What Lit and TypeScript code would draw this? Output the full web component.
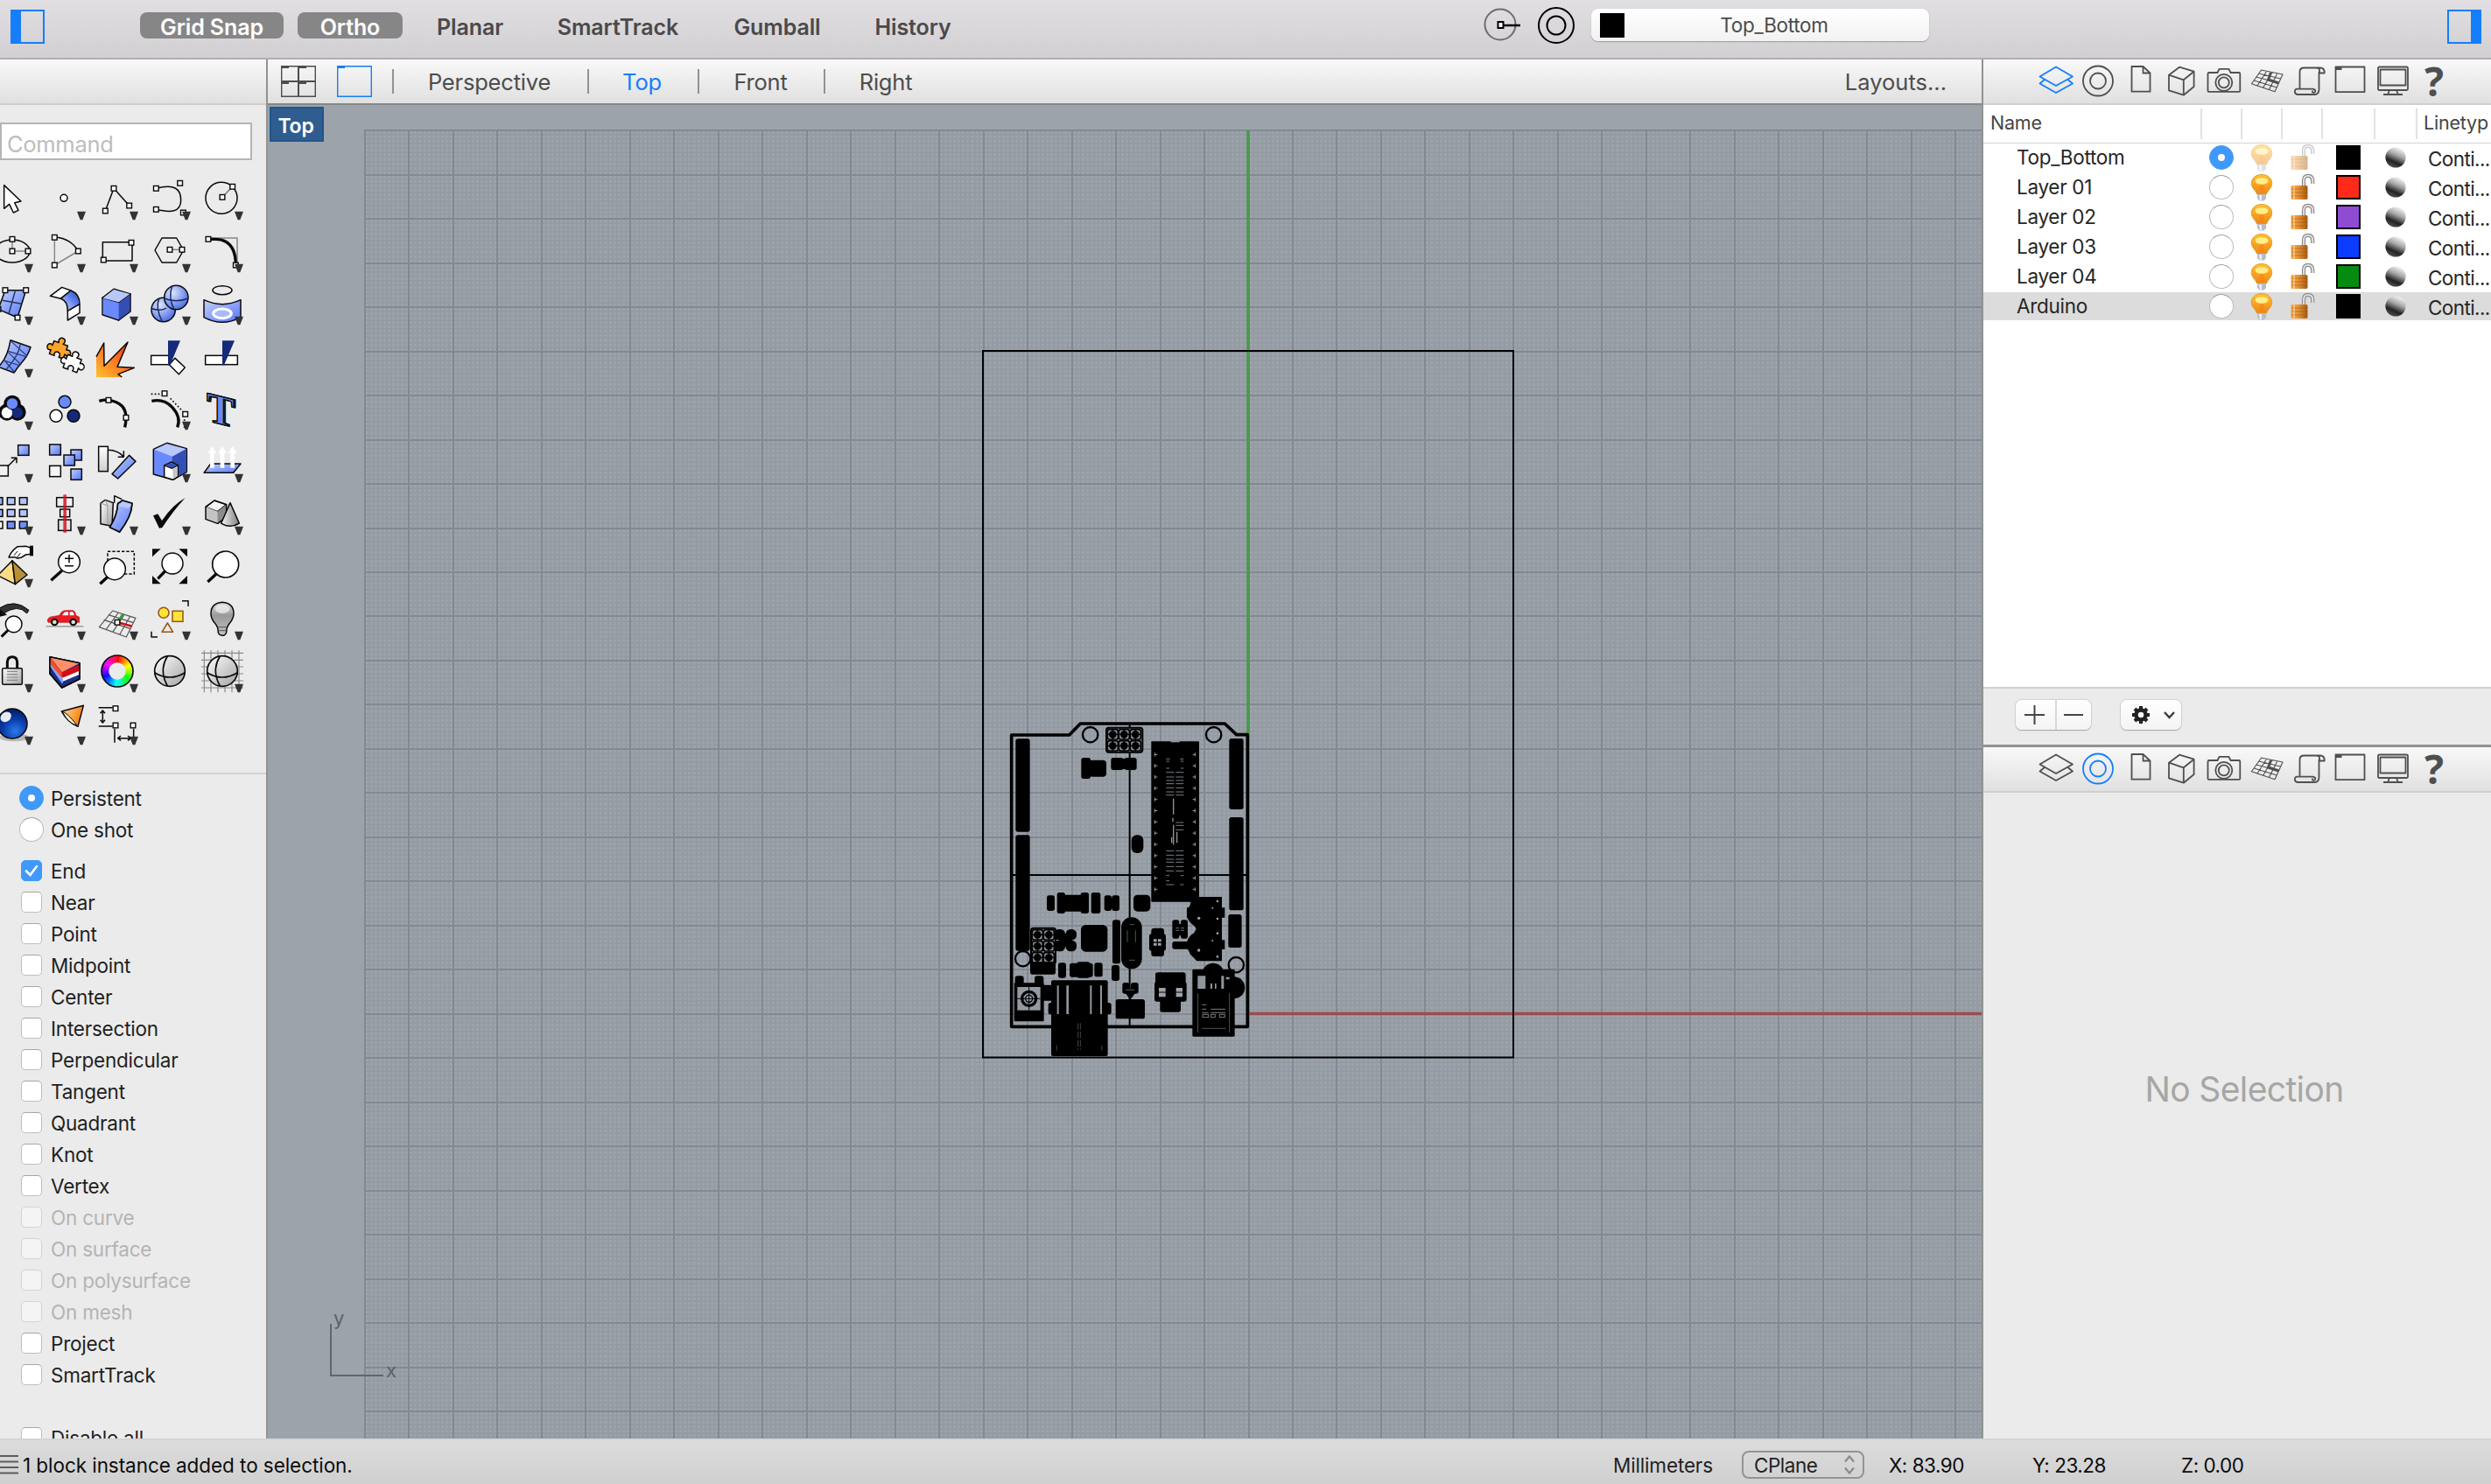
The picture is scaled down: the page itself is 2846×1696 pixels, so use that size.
import { LitElement, html, css, svg, nothing } from "lit";
import { customElement, state } from "lit/decorators.js";
import { classMap } from "lit/directives/class-map.js";
import { styleMap } from "lit/directives/style-map.js";

/* ---------- drawing helpers ---------- */
const INK = "#0a0a0a";
const node = (x: number, y: number) =>
  svg`<rect x=${x - 8.5} y=${y - 8.5} width="17" height="17" fill="#fff" stroke=${INK} stroke-width="4.2"/>`;
const box = (x: number, y: number, w: number, h: number, fill: string) =>
  svg`<rect x=${x} y=${y} width=${w} height=${h} fill=${fill} stroke=${INK} stroke-width="4.5"/>`;
const p = (d: string, fill = "none", stroke = INK, w = 4.5) =>
  svg`<path d=${d} fill=${fill} stroke=${stroke} stroke-width=${w} stroke-linejoin="round"/>`;
const c = (x: number, y: number, r: number, fill: string, w = 4.5, stroke = INK) =>
  svg`<circle cx=${x} cy=${y} r=${r} fill=${fill} stroke=${stroke} stroke-width=${w}/>`;

const wheel = () => {
  const out = [];
  const n = 36;
  for (let i = 0; i < n; i++) {
    const a = ((i * 360) / n - 90) * (Math.PI / 180);
    const b = (((i + 1.15) * 360) / n - 90) * (Math.PI / 180);
    out.push(svg`<path d=${`M${402 + 41 * Math.cos(a)} ${773 + 41 * Math.sin(a)} A41 41 0 0 1 ${402 + 41 * Math.cos(b)} ${773 + 41 * Math.sin(b)}`}
      fill="none" stroke=${`hsl(${(i * 360) / n},100%,52%)`} stroke-width="24"/>`);
  }
  return out;
};
const globe = (x: number) => svg`${c(x, 773, 52, "url(#grey)", 5)}
  ${p(`M${x - 52} 778 Q${x} 810 ${x + 52} 778 M${x - 8} 722 Q${x - 38} 770 ${x - 8} 824`, "none", INK, 5)}`;
/* Jigsaw piece: knobs above and below, sockets at the sides. */
const puzzle = (x: number, y: number, fill: string) => svg`<g transform=${`translate(${x} ${y}) rotate(20)`}>
  ${p("M-25 -23H-8Q-12 -30 -10 -35Q-6 -42 0 -42Q8 -42 11 -35Q12 -30 8 -23H25V-8Q32 -12 37 -9Q43 -5 43 0Q42 9 36 11Q31 12 25 8V24H9Q12 17 9 13Q5 8 0 8Q-7 9 -9 14Q-11 19 -7 24H-25V9Q-32 13 -37 9Q-42 5 -41 -1Q-40 -9 -33 -10Q-29 -10 -25 -7Z", fill)}</g>`;

/* Tools are listed row by row; art uses sheet units of 180 per cell. */
type Tool = { art: unknown; menu?: boolean };
const t = (art: unknown, menu = true): Tool => ({ art, menu });

const SHEET_A: Tool[][] = [
  [
    t(p("M14 67V147L32 132L46 161L63 153L50 127L72 122Z", "#fff"), false),
    t(c(219, 111, 12, "#fff")),
    t(svg`${p("M361 155L390 78L443 137")}${node(361, 155)}${node(390, 78)}${node(443, 137)}`),
    t(svg`${p("M535 78C600 60 620 82 620 118C620 160 585 162 535 150")}${node(535, 78)}${node(535, 150)}${node(617, 60)}${node(628, 161)}`),
    t(svg`${c(759, 111, 54, "none")}${p("M762 108L797 72", "none", "#777")}${node(762, 108)}${node(797, 72)}`),
  ],
  [
    t(svg`<ellipse cx="42" cy="293" rx="60" ry="39" fill="none" stroke=${INK} stroke-width="4.5"/>${p("M42 252V293H96", "none", "#888")}${node(42, 252)}${node(42, 293)}${node(96, 293)}`),
    t(svg`${p("M187 246V341L268 293", "none", "#888")}${p("M187 244Q245 250 268 293")}${node(187, 246)}${node(187, 341)}${node(268, 293)}`),
    t(svg`${p("M352 262H453V326H352Z")}${node(450, 264)}${node(355, 323)}`),
    t(svg`${p("M531 290L555 248H605L629 290L605 332H555Z")}${p("M582 288H622", "none", "#888")}${node(582, 288)}${node(624, 288)}`),
    t(svg`${p("M714 248H813V341", "none", "#888")}${p("M714 252H740Q808 254 808 341", "none", INK, 10)}${node(714, 252)}${node(808, 341)}`),
  ],
  [
    t(svg`${p("M18 427H89L60 521L-6 492Z", "url(#blue)")}${p("M8 462L74 474M52 430L30 508", "none", "#26335f")}${node(18, 427)}${node(89, 427)}${node(60, 521)}${node(-6, 492)}`),
    t(svg`${p("M172 447L212 417L243 428L208 456Z", "#fff")}${p("M208 456L243 428Q274 440 273 475L232 498Q232 464 208 456Z", "url(#blueDown)")}${p("M232 498L273 475V505L232 530Z", "#fff")}`),
    t(svg`${p("M351 453L390 423L447 440L407 470Z", "#b9c8fb")}${p("M351 453L407 470V530L351 511Z", "#6a8afb")}${p("M407 470L447 440V500L407 530Z", "#334fb3")}<path d="M353 454L390 425L445 440L407 468Z" fill="#b9c8fb"/><path d="M353 456L408 471V528L353 509Z" fill="#6a8afb"/><path d="M407 471L445 442V499L407 528Z" fill="#334fb3"/>`),
    t(svg`${c(560, 494, 41, "url(#blueBall)")}${p("M545 456Q532 490 556 534M520 490Q555 500 570 488", "none", "#1c2c63")}${c(604, 452, 41, "url(#blueBall)")}${p("M590 413Q576 450 596 492M563 455Q604 472 644 455", "none", "#1c2c63")}`),
    t(svg`<ellipse cx="762" cy="427" rx="33" ry="15" fill="none" stroke=${INK} stroke-width="4.5"/>${p("M699 460Q762 490 825 460V520Q762 554 699 520Z", "url(#blue)")}<ellipse cx="762" cy="507" rx="31" ry="16" fill="#a9bafa" stroke="#fff" stroke-width="9"/>`),
  ],
  [
    t(svg`${p("M36 598L105 622Q96 650 77 672Q60 692 48 710L-6 690Q26 660 36 598Z", "url(#blue)")}${p("M28 636L92 656M14 668L70 686M70 610Q66 650 20 700M36 600L92 652M28 640L72 682M16 668L48 706", "none", "#22356f", 3.5)}`),
    t(svg`${puzzle(201, 631, "#fba32a")}${puzzle(248, 678, "#fff")}`, false),
    t(svg`<path d="M330 725V655L356 608L357 687L438 605L402 690L460 693L405 715L418 725Z" fill="url(#fire)"/>${p("M330 655L356 608L357 687L438 605L402 690L460 693L405 715L418 725")}`, false),
    t(svg`${box(518, 651, 62, 31, "#fff")}${p("M580 682L600 660L634 692L613 715Z", "#fff")}<path d="M576 600H618L583 684H576Z" fill="#152a78"/>`, false),
    t(svg`${box(704, 651, 110, 31, "#fff")}<path d="M762 600H804L768 684H762Z" fill="#152a78"/>`, false),
  ],
  [
    t(svg`<g fill=${INK}><circle cx="42" cy="816" r="29"/><circle cx="24" cy="845" r="29"/><circle cx="60" cy="845" r="29"/></g><circle cx="24" cy="847" r="19" fill="#fff"/><circle cx="60" cy="847" r="19" fill="#152a78"/>${c(42, 816, 20, "#6a8afb", 3)}`),
    t(svg`${c(222, 810, 21, "#6a8afb")}${c(192, 858, 21, "#fff")}${c(252, 858, 21, "#152a78")}`, false),
    t(svg`${p("M340 807Q355 802 372 804Q432 812 432 864Q432 880 428 897", "none", INK, 10)}${node(372, 804)}${node(432, 864)}`, false),
    t(svg`${p("M520 807Q562 798 590 828Q622 862 608 897", "none", INK, 10)}<path d="M518 783H552M584 798L626 842M632 870V900" fill="none" stroke=${INK} stroke-width="5" stroke-dasharray="5 7"/>${node(564, 781)}${node(635, 852)}`),
    t(svg`<g transform="translate(708 874) skewY(14)"><text class="tool-t" x="5" y="0" textLength="95" lengthAdjust="spacingAndGlyphs" fill="#2c48ad">T</text><text class="tool-t" x="0" y="0" textLength="95" lengthAdjust="spacingAndGlyphs" fill="#6a8afb">T</text></g>`, false),
  ],
];

const SHEET_B: Tool[][] = [
  [
    t(svg`${box(62, -2, 37, 35, "url(#blue)")}${box(-8, 68, 36, 36, "#f2f2f2")}${p("M26 72L56 42M38 42H57V60")}`),
    t(svg`${box(170, -4, 38, 36, "url(#blue)")}${box(243, 14, 37, 36, "url(#blue)")}${box(219, 32, 37, 36, "url(#blue)")}${box(170, 69, 38, 37, "#f6f6f6")}${box(243, 80, 37, 37, "url(#blue)")}`, false),
    t(svg`${box(338, 3, 32, 85, "url(#greyDown)")}${p("M384 97L443 33L465 54L404 113Z", "url(#blue)")}${p("M370 15Q405 16 424 38M424 18V39H404")}`, false),
    t(svg`${p("M526 12L572 -9L640 10V90L593 117L526 98Z", "#6a8afb")}<path d="M529 13L572 -6L637 11L590 37Z" fill="#b9c8fb"/><path d="M590 38L638 12V89L593 114Z" fill="#334fb3"/>${p("M563 68L588 56L610 68V106L593 117L563 108Z", "#fff")}<path d="M565 67L588 58L608 68L590 77Z" fill="#334fb3"/>${p("M563 68L590 78L610 68", "none", INK, 3.5)}<path d="M592 80L608 71V104L593 114Z" fill="#c4c4c4"/>`),
    t(svg`${p("M722 62H825L800 93H699Z", "url(#blue)")}<g fill="#fff"><path d="M720 76V26H712L727 2L742 26H734V76ZM755 76V26H747L762 2L777 26H769V76ZM790 76V26H782L797 2L812 26H804V76Z"/></g>`),
  ],
  [
    t(svg`${[0, 1, 2].map((r) => [0, 1, 2].map((k) => box(-17 + k * 42, 178 + r * 41, 26, 24, r === 2 && k === 0 ? "#fff" : r === 2 ? "#6f8efb" : k === 0 ? "#93aafa" : "#b3c3fb")))}`),
    t(svg`${box(194, 178, 56, 31, "#efefef")}${box(206, 218, 33, 26, "#efefef")}${box(200, 254, 43, 37, "#e2e2e2")}<rect x="217" y="168" width="11" height="130" fill="#d2101c" fill-opacity=".82"/>`),
    t(svg`${p("M345 197L361 186L388 196L384 276L345 268Z", "url(#grey)")}${p("M361 186L369 206V270M345 197L369 206", "none", "#999", 3)}${p("M392 196V172L418 184")}${p("M404 198L420 188L453 198Q452 242 410 296L376 280Q402 240 404 198Z", "url(#blue)")}${p("M420 190L453 198L440 214L406 206", "#b9c8fb", "#b9c8fb", 2)}${p("M404 198L420 188L453 198Q452 242 410 296L376 280Q402 240 404 198Z")}`),
    t(svg`<path d="M525 240L541 234L555 257Q592 202 635 179Q592 225 556 281L546 283Z" fill=${INK}/>`),
    t(svg`${p("M705 210L735 188L776 202L746 226Z", "#f4f4f4")}${p("M705 210L746 226V267L705 252Z", "#c4c4c4", "#c4c4c4", 1)}${p("M746 226L776 202V245L746 267Z", "#8b8b8b", "#8b8b8b", 1)}${p("M705 210L735 188L776 202V245L746 267L705 252Z")}${p("M789 196L758 266Q789 286 820 266Z", "url(#greyAcross)")}`),
  ],
  [
    t(svg`${p("M30 383Q38 362 60 346L90 345L104 350V372L88 374L72 384L60 386L50 382Z", "#fff")}${p("M48 376L60 362M58 384L70 368", "none", INK, 3)}<rect x="102" y="343" width="12" height="35" fill=${INK}/>${p("M42 394L52 475L-8 445Z", "#fbdb86")}${p("M42 394L93 443L52 475Z", "#b69038")}`),
    t(svg`${p("M175 462L212 429", "none", INK, 10)}${c(237, 399, 37, "#fff")}${p("M222 387H252M237 373V402M222 412H252", "none", INK, 4.5)}`, false),
    t(svg`<rect x="369" y="363" width="91" height="77" fill="none" stroke=${INK} stroke-width="4.5" stroke-dasharray="10 6"/>${p("M343 474L370 449", "none", INK, 10)}${c(393, 423, 37, "#fff")}`, false),
    t(svg`${p("M541 456L568 428", "none", INK, 10)}${c(591, 404, 36, "#fff")}<path d="M522 354H551L522 381ZM642 354H613L642 381ZM522 474H551L522 446ZM642 474H613L642 446Z" fill=${INK}/>`, false),
    t(svg`${p("M712 467L745 436", "none", INK, 10)}${c(773, 407, 45, "#fff", 5)}`, false),
  ],
  [
    t(svg`${p("M5 655L28 632", "none", INK, 9)}${c(47, 612, 28, "#fff")}<path d="M92 575Q62 540 8 578L-14 556L-4 558Q50 522 99 564Z" fill="#333" stroke=${INK} stroke-width="3"/><path d="M-16 548L24 580L-16 590Z" fill=${INK}/>`),
    t(svg`<rect x="158" y="617" width="128" height="5" fill="#a3a3a3"/><path d="M163 602Q162 588 180 586L204 582Q210 566 224 565H250Q258 566 260 582L272 588V606H166Z" fill="#e81c24" stroke="#b30f16" stroke-width="2"/><path d="M214 582Q218 571 226 570H234V582ZM239 570H249Q253 572 254 582H239Z" fill="#f6f6f6"/>${c(187, 605, 10, "#ddd", 6)}${c(251, 605, 10, "#ddd", 6)}`),
    t(svg`${p("M386 566L465 591L433 656L340 622ZM371 580L457 607M356 597L447 628M406 572L363 631M426 579L386 640M446 585L410 648", "none", "#555", 3.5)}${p("M404 604L421 578", "none", "#28a428", 8)}${p("M404 606L452 619", "none", "#d01018", 8)}${node(402, 606)}`),
    t(svg`${c(561, 573, 18, "#ffe438", 4.5, "#9a5410")}<rect x="591" y="567" width="36" height="36" fill="#ffe438" stroke="#9a5410" stroke-width="4.5"/>${p("M574 608L555 639H593Z", "none", "#9a5410")}${p("M624 532H645V551M519 637V656H540")}`),
    t(svg`${p("M762 537Q802 540 801 578Q799 596 786 610Q776 622 776 640Q772 651 762 651Q750 650 748 640Q748 622 738 610Q724 596 723 578Q722 540 762 537Z", "url(#greyBulb)")}<ellipse cx="762" cy="560" rx="25" ry="15" fill="#eee" fill-opacity=".8"/>${p("M748 622H776M749 634H775", "none", "#555", 3)}`),
  ],
  [
    t(svg`${p("M25 765V742Q26 724 42 724Q58 724 59 742V765", "none", INK, 9)}<rect x="8" y="763" width="68" height="56" rx="4" fill="url(#grey)" stroke=${INK} stroke-width="4.5"/><path d="M24 774H60M24 784H60M24 794H60M24 804H60" stroke="#8a8a8a" stroke-width="3.5"/>`),
    t(svg`${p("M171 724L273 745V800L212 830L171 782Z", "#1c2f86")}<path d="M173 755L212 810L271 785V770L212 793L173 735Z" fill="#fff"/><path d="M171 755L212 815L216 813V800L171 740Z" fill="#86a4ff"/><path d="M212 776L272 752V772L214 796Z" fill="#d40d16"/><path d="M173 727L212 779V796L172 748Z" fill="#ff4a22"/><path d="M173 726L272 746L212 777Z" fill="#ff8f68"/>${p("M171 724L273 745V800L212 830L171 782Z")}`),
    t(svg`${wheel()}${c(402, 773, 54, "none", 5)}`),
    t(globe(582), false),
    t(svg`<path d="M700 702V846M723 702V846M747 702V846M771 702V846M795 702V846M819 702V846M690 711H834M690 735H834M690 758H834M690 782H834M690 806H834M690 830H834" stroke="#8a8a8a" stroke-width="3.5"/>${globe(762)}`),
  ],
  [
    t(svg`<ellipse cx="48" cy="1000" rx="50" ry="14" fill="#000" fill-opacity=".22"/>${c(42, 953, 51, "url(#navyBall)")}<ellipse cx="20" cy="930" rx="20" ry="16" transform="rotate(-40 20 930)" fill="#fff" fill-opacity=".9"/>`),
    t(svg`${p("M211 911L286 891L267 963Q232 950 211 911Z", "url(#amber)")}<path d="M214 912Q232 916 264 960Q232 950 214 912Z" fill="#fff3d0" stroke=${INK} stroke-width="3"/>`),
    t(svg`${p("M338 898H386M338 962H386M393 970V1018M458 970V1000M352 910V948M344 918L352 908L360 918M344 940L352 950L360 940M405 1003H446M414 995L404 1003L414 1011M438 995L448 1003L438 1011", "none", INK, 4.5)}${node(396, 901)}${node(396, 959)}${node(456, 959)}`),
  ],
];

const gradients = svg`<defs>
  <linearGradient id="blue" x1="0" y1="0" x2="1" y2="1"><stop offset="0" stop-color="#c3d0fc"/><stop offset="1" stop-color="#5577f6"/></linearGradient>
  <linearGradient id="blueDown" x1="0" y1="1" x2="1" y2="0"><stop offset="0" stop-color="#dbe3fd"/><stop offset=".6" stop-color="#5d7df0"/><stop offset="1" stop-color="#3149a0"/></linearGradient>
  <radialGradient id="blueBall" cx=".35" cy=".3" r=".8"><stop offset="0" stop-color="#dde6ff"/><stop offset="1" stop-color="#3f63e0"/></radialGradient>
  <radialGradient id="navyBall" cx=".6" cy=".75" r=".8"><stop offset="0" stop-color="#2b7bea"/><stop offset=".5" stop-color="#0b3cab"/><stop offset="1" stop-color="#031455"/></radialGradient>
  <linearGradient id="fire" x1="0" y1="1" x2="1" y2="0"><stop offset="0" stop-color="#ffc02e"/><stop offset=".55" stop-color="#fd6f22"/><stop offset="1" stop-color="#ef2511"/></linearGradient>
  <linearGradient id="amber" x1="0" y1="0" x2="1" y2=".4"><stop offset="0" stop-color="#ffe3a0"/><stop offset="1" stop-color="#f57c06"/></linearGradient>
  <linearGradient id="grey" x1="0" y1="0" x2="1" y2="1"><stop offset="0" stop-color="#fff"/><stop offset="1" stop-color="#a2a2a2"/></linearGradient>
  <linearGradient id="greyDown" x1="0" y1="0" x2="0" y2="1"><stop offset="0" stop-color="#fff"/><stop offset="1" stop-color="#cfcfcf"/></linearGradient>
  <linearGradient id="greyAcross"><stop offset="0" stop-color="#f6f6f6"/><stop offset="1" stop-color="#7c7c7c"/></linearGradient>
  <linearGradient id="greyBulb" x1="0" y1="0" x2="0" y2="1"><stop offset="0" stop-color="#ddd"/><stop offset=".4" stop-color="#9a9a9a"/><stop offset="1" stop-color="#c4c4c4"/></linearGradient>
  <linearGradient id="bulb" x1="0" y1="0" x2="0" y2="1"><stop offset="0" stop-color="#ffc532"/><stop offset=".55" stop-color="#f9a021"/><stop offset="1" stop-color="#e88a1c"/></linearGradient>
  <linearGradient id="lock"><stop offset="0" stop-color="#eda54a"/><stop offset=".4" stop-color="#e9953a"/><stop offset="1" stop-color="#a85a10"/></linearGradient>
  <linearGradient id="material" x1=".75" y1="0" x2=".3" y2="1"><stop offset="0" stop-color="#fff"/><stop offset=".4" stop-color="#a5a5a5"/><stop offset=".72" stop-color="#222"/><stop offset="1" stop-color="#555"/></linearGradient>
</defs>`;

/* ---------- inspector tab icons, 44 x 40 ---------- */
const PANEL_TABS: unknown[] = [
  svg`<path d="M3.5 14.5L22 3.5L41 14.5L22 25ZM9 18L3.5 22.5L22 33L41 22.5L35.500 18"/>`,
  svg`<circle cx="22" cy="19.500" r="17"/><circle cx="22" cy="19.500" r="9"/>`,
  svg`<path d="M12.500 3H25.500L33.500 10.500V31.700H12.500ZM25.500 3V10.500H33.500"/>`,
  svg`<path d="M7 12.700L19 3.700L35.600 8.700V26L23.800 35.700L7 30.300ZM7 12.700L23.800 18.300L35.600 8.700M23.800 18.300V35.700"/>`,
  svg`<path d="M5 10H14.500L16.500 5.800H27.500L29.500 10H39Q40.300 10 40.300 11.500V30.500Q40.300 31.900 39 31.900H5Q3.500 31.900 3.500 30.500V11.500Q3.500 10 5 10Z"/><circle cx="21.800" cy="21.300" r="9.500"/><circle cx="21.800" cy="21.300" r="6"/>`,
  svg`<path stroke-width="1.100" d="M16.600 7L41 12L32 31.700L5.400 22.700ZM13.800 11L39 17M11 15L36.700 22M8.200 19L34.300 27M22.700 8.300L12 25M28.800 9.500L18.700 27.200M34.900 10.700L25.400 29.500"/><path stroke-width="3" d="M27.500 10L24.500 18L36.500 22"/>`,
  svg`<path d="M12.500 29V9Q12.500 4.500 17.500 4.500H36.500Q41 5 40.700 10.500H35V6.500Q34.500 4.500 32 5M34.500 9V29Q34.500 35 29.500 35H10Q6.800 34.500 6.800 31.500Q7 28.800 9.500 28.600H27.500Q30.500 29 30.300 31.500Q29.500 33.500 27 32.500V30.500"/>`,
  svg`<path d="M5.500 3.500H38.500V32.200H5.500Z"/><path d="M5.500 5.500H12.500" stroke-width="3"/>`,
  svg`<path d="M7.500 3.500H38.500Q40 3.500 40 5V28.500Q40 30 38.500 30H7.500Q6 30 6 28.500V5Q6 3.500 7.500 3.500ZM8.500 6.500H37.500V24.500H8.500ZM19 30L17.500 34M27 30L28.500 34M12 35H34"/>`,
];

/* ---------- layer list ---------- */
const LAYERS = [
  { name: "Top_Bottom", color: "#000000" },
  { name: "Layer 01", color: "#ff2a1a" },
  { name: "Layer 02", color: "#8f4bd2" },
  { name: "Layer 03", color: "#0b3cff" },
  { name: "Layer 04", color: "#058a12" },
  { name: "Arduino", color: "#000000" },
];
const bulb = html`<svg width="28" height="32" viewBox="0 0 28 32"><path d="M14 1.500C7 1.500 2.300 6 2.300 11.500C2.300 17 7 19 8.500 24H19.500C21 19 25.700 17 25.700 11.500C25.700 6 21 1.500 14 1.500Z" fill="url(#bulb)" stroke="#e09a2c" stroke-width="1"/><ellipse cx="14" cy="9" rx="7.500" ry="3.800" fill="#ffee8a"/><ellipse cx="14" cy="18" rx="3" ry="5" fill="#f98318" fill-opacity=".65"/><path d="M9 24H19V29L16.500 31.500H11.500L9 29Z" fill="#b7bec9"/><path d="M11 25H14V31H12Z" fill="#eef1f5"/></svg>`;
const lock = html`<svg width="30" height="32" viewBox="0 0 30 32"><path d="M17 14V8.500Q17 2.800 22 2.800Q27.200 2.800 27.200 8.500V12" fill="none" stroke="#8b8b8b" stroke-width="4.200"/><path d="M17 14V8.500Q17 2.800 22 2.800Q27.200 2.800 27.200 8.500V12" fill="none" stroke="#e6e6e6" stroke-width="1.800"/><rect x="2.500" y="14" width="19" height="16" rx="1.500" fill="url(#lock)"/><path d="M3 18H21M3 22H21M3 26H21" stroke="#8c4a0c" stroke-opacity=".45"/><path d="M6 14V30" stroke="#ffd79a" stroke-opacity=".6" stroke-width="2"/></svg>`;
const material = html`<svg width="24" height="26" viewBox="0 0 24 26"><circle cx="12" cy="13" r="11.600" fill="url(#material)"/></svg>`;

/* ---------- construction plane grid ---------- */
const STEP = 50.48;
const gridLines = (div: number) => {
  let d = "";
  const s = STEP / div;
  for (let i = 0; i <= 37 * div; i++) {
    if (div > 1 && i % div === 0) continue;
    d += `M${Math.round(110.9 + i * s)} 29V1525`;
  }
  for (let i = 0; i <= 30 * div; i++) {
    if (div > 1 && i % div === 0) continue;
    d += `M110 ${Math.round(29.2 + i * s)}H1959`;
  }
  return d;
};
const MINOR = gridLines(10);
const MAJOR = gridLines(1);

/* ---------- circuit board block, outline units at 3 per pixel ---------- */
const k = (x: number, y: number, w: number, h: number, r = 8) =>
  svg`<rect x=${x} y=${y} width=${w} height=${h} rx=${r}/>`;
const ring = (x: number, y: number) => svg`<circle cx=${x} cy=${y} r="26" fill="none" stroke="#000" stroke-width="7"/>`;
const header = (x: number, y: number, cols: number, rows: number) => {
  const out = [svg`<rect x=${x} y=${y} width=${cols * 40 + 4} height=${rows * 38 + 8} rx="8" fill="#8f969e" stroke="#000" stroke-width="6"/>`];
  for (let i = 0; i < cols; i++)
    for (let j = 0; j < rows; j++) {
      const cx = x + 22 + i * 39, cy = y + 23 + j * 39;
      out.push(svg`<rect x=${cx - 18} y=${cy - 17} width="36" height="34" rx="7" fill="none" stroke="#000" stroke-width="5"/><circle cx=${cx} cy=${cy} r="13"/><path d=${`M${cx - 19} ${cy}H${cx + 19}M${cx} ${cy - 18}V${cy + 18}`} stroke="#000" stroke-width="4"/>`);
    }
  return out;
};
const pins = () => {
  const out = [];
  for (let i = 0; i < 13; i++) {
    const y = 187 + i * 38.5;
    out.push(svg`<path d=${`M568 ${y - 6}V${y + 6}M568 ${y}H577M706 ${y - 6}V${y + 6}M706 ${y}H698`}/>`);
  }
  return out;
};
const board = svg`<g fill="#000">
  <path d="M77 1120V120H275L313 81H808L848 119H886V1120Z" fill="none" stroke="#000" stroke-width="11" stroke-linejoin="round"/>
  <path d="M482 81V1120M77 600H886" stroke="#000" stroke-width="6"/>
  ${k(91, 133, 49, 319)}${k(91, 463, 49, 397)}${k(823, 132, 49, 243)}${k(823, 402, 49, 319)}${k(820, 735, 46, 114)}
  ${ring(347, 119)}${ring(770, 119)}${ring(116, 887)}${ring(847, 908)}
  ${header(402, 95, 3, 2)}
  ${k(316, 198, 32, 72)}${k(342, 206, 60, 57, 12)}${k(418, 198, 42, 42)}${k(464, 198, 42, 42)}${k(450, 201, 30, 36)}
  ${k(556, 142, 164, 550, 3)}
  <rect x="623" y="140" width="30" height="5" fill="#8f969e"/>
  <g stroke="#9ca3ab" stroke-width="3">${pins()}</g>
  <g stroke="#8f969e" stroke-width="2.500"><path d="M607 248H634M640 248H667M607 264H634M640 264H667M607 276H634M640 276H667M607 287H634M640 287H667M607 301H634M640 301H667M607 315H634M640 315H667M607 326H634M640 326H667M640 420H667M640 430H667M640 445H667M607 517H634M640 517H667M607 532H634M640 532H667M607 546H634M640 546H667M607 556H634M640 556H667M607 571H634M640 571H667M607 586H634M640 586H667M607 633H634M655 633H667M607 202H620M655 202H667M607 210H618M657 210H667M607 234H618M657 234H667M607 602H618M657 602H667M607 620H618"/><path d="M632 338V392M630 404V418M632 428V496M626 470V490M644 452V490" stroke-width="4"/></g>
  ${k(488, 463, 41, 62, 18)}
  ${k(198, 670, 27, 53)}${k(233, 660, 28, 72)}${k(255, 668, 65, 57)}${k(314, 660, 28, 72)}${k(350, 660, 32, 72)}${k(395, 670, 25, 53)}${k(421, 670, 26, 53)}${k(410, 680, 25, 33)}${k(495, 668, 58, 57, 14)}
  ${header(144, 782, 2, 3)}
  ${k(223, 786, 38, 37, 16)}${k(263, 786, 37, 37, 16)}${k(223, 824, 38, 38, 16)}${k(263, 824, 37, 38, 16)}${k(240, 802, 44, 44)}
  ${k(315, 771, 91, 92, 16)}${k(423, 754, 27, 150)}
  ${k(453, 745, 71, 177, 35)}
  <path d="M474 790V830M502 790V830M482 770H498M480 892H500" stroke="#777d85" stroke-width="2"/>
  ${k(556, 782, 44, 97, 10)}${k(549, 802, 57, 58, 8)}<path d="M562 818H592V844H562ZM577 816V846M560 831H594" fill="#9ca3ab" stroke="#000" stroke-width="4"/>
  ${k(628, 754, 24, 64)}${k(657, 754, 24, 64)}${k(636, 768, 36, 40)}<path d="M640 782H652M657 782H669M640 790H652M657 790H669" stroke="#9ca3ab" stroke-width="2"/>
  ${k(628, 828, 62, 26)}
  <path d="M693 675H798V712H808V746H798V823H808V855H798V895H712L688 870V825L710 785L688 748H678V712H688Z"/>
  <circle cx="722" cy="733" r="44"/><circle cx="722" cy="838" r="44"/>
  <g fill="#9ca3ab"><circle cx="783" cy="690" r="4"/><circle cx="766" cy="713" r="3"/><circle cx="719" cy="748" r="5"/><circle cx="783" cy="750" r="4"/><circle cx="783" cy="800" r="4"/><circle cx="766" cy="825" r="3"/><circle cx="719" cy="858" r="5"/><circle cx="783" cy="880" r="4"/></g>
  ${k(141, 898, 87, 43)}${k(237, 901, 27, 52)}${k(276, 902, 80, 48)}${k(301, 898, 45, 55)}${k(361, 901, 28, 48)}${k(420, 909, 27, 54)}
  ${k(89, 946, 30, 34)}${k(156, 946, 31, 34)}${k(86, 970, 102, 132, 3)}<rect x="97" y="984" width="79" height="80" fill="#939aa2"/>
  <circle cx="137" cy="1024" r="24" fill="none" stroke="#000" stroke-width="10"/><circle cx="137" cy="1024" r="12" fill="none" stroke="#000" stroke-width="4"/><path d="M97 1024H176M137 984V1064" stroke="#000" stroke-width="3"/>
  ${k(178, 977, 40, 54)}${k(203, 1038, 216, 40)}${k(213, 961, 194, 260, 6)}
  <path d="M233 979H239V1077H233ZM265 979H273V1077H265ZM346 979H352V1077H346ZM381 979H387V1077H381Z" fill="#8f969e"/>
  <path d="M305 1108V1200M313 1108V1200M232 1184V1202M387 1184V1202" stroke="#666" stroke-width="2" stroke-dasharray="22 7"/>
  ${k(457, 969, 25, 38)}${k(486, 969, 26, 38)}<path d="M457 990H512L484 1028Z"/>${k(434, 1026, 100, 67)}
  <path d="M468 994H498" stroke="#80868e" stroke-width="2"/>
  ${k(570, 934, 104, 42)}${k(567, 966, 110, 68)}${k(586, 1020, 71, 50)}<path d="M582 987H605V1018H582ZM641 987H663V1018H641Z" fill="#9ca3ab"/><path d="M580 1002H607M639 1002H665" stroke="#000" stroke-width="3"/>
  ${k(697, 923, 145, 231, 4)}<circle cx="768" cy="940" r="38"/><circle cx="840" cy="986" r="37"/>
  <path d="M715 946H742V990H715ZM759 972H765V990H759ZM774 972H779V990H774ZM796 946H805V990H796ZM812 950H824V958H812Z" fill="#8f969e"/>
  <path d="M730 1045H745M730 1060H745M760 1060H810M730 1072H752M760 1072H810M732 1078H752V1088H732ZM760 1078H775V1088H760ZM790 1078H808V1088H790Z" stroke="#b5bac0" stroke-width="2" fill="none"/>
  <path d="M716 1005V1140M824 1005V1140M730 1126H812" stroke="#777d85" stroke-width="2"/>
</g>`;

const SNAPS: [string, boolean][] = [
  ["End", true], ["Near", true], ["Point", true], ["Midpoint", true], ["Center", true], ["Intersection", true],
  ["Perpendicular", true], ["Tangent", true], ["Quadrant", true], ["Knot", true], ["Vertex", true],
  ["On curve", false], ["On surface", false], ["On polysurface", false], ["On mesh", false],
  ["Project", true], ["SmartTrack", true],
];

@customElement("app-root")
export class AppRoot extends LitElement {
  @state() private snaps = new Set(["End"]);
  @state() private persistent = true;
  @state() private current = "Top_Bottom";

  static styles = css`
    :host { display: block; width: 2846px; height: 1696px; overflow: hidden; font-family: Inter, "Liberation Sans", sans-serif; color: #262626; background: #ebebeb; white-space: nowrap; }
    * { box-sizing: border-box; }
    svg { display: block; flex: none; }
    .defs { position: absolute; }
    .app { display: grid; grid-template-rows: 68px 1576px 52px; height: 1696px; }

    .top { display: flex; align-items: flex-start; background: linear-gradient(#e1dfe2, #d1cfd2); border-bottom: 2px solid #b0aeb1; }
    .side { width: 39px; height: 39px; margin-top: 11px; border: 2px solid #157efb; flex: none; }
    .side.l { margin-left: 12px; border-left-width: 12px; }
    .side.r { margin-left: auto; margin-right: 11px; border-right-width: 12px; }
    .modes { display: flex; margin: 14px 0 0 109px; }
    .mode { height: 30px; line-height: 35px; font-size: 25px; font-weight: 600; color: #4b494b; text-align: center; letter-spacing: -.1px; }
    .mode.on { background: #878687; color: #fff; border-radius: 8px; }
    .w-grid { width: 164px; }
    .w-ortho { width: 120px; margin-left: 16px; }
    .w-planar { width: 80px; margin-left: 37px; }
    .w-smart { width: 144px; margin-left: 57px; }
    .w-gum { width: 104px; margin-left: 58px; }
    .w-hist { width: 92px; margin-left: 57px; }
    .snapic { margin: 5px 0 0 604px; }
    .picker { display: flex; align-items: center; width: 386px; height: 37px; margin: 10px 0 0 16px; padding-left: 10px; border-radius: 8px; background: linear-gradient(#fff, #f2f2f2); box-shadow: 0 1px 1px #9c9a9d, 0 0 1px #aaa; }
    .picker i { width: 28px; height: 28px; background: #000; }
    .picker span { flex: 1; text-align: center; font-size: 22.5px; letter-spacing: -.3px; color: #4b4b4b; padding-right: 6px; }

    .main { display: grid; grid-template-columns: 304px 1962px 580px; min-height: 0; }
    .bar { height: 52px; background: linear-gradient(#f9f9f9, #e0e0e0); border-bottom: 2px solid #cfcfcf; display: flex; align-items: center; flex: none; }

    .left { overflow: hidden; background: #ebebeb; display: flex; flex-direction: column; }
    .cmd { width: 288px; height: 43px; margin: 20px 0 0 0; border: 2px solid #b4b4b4; background: #fff; color: #bdbdbd; font-size: 25.500px; letter-spacing: -.3px; line-height: 45px; padding-left: 6px; flex: none; }
    .tools { display: grid; grid-template-columns: repeat(5, 60px); grid-auto-rows: 60px; margin: 13px 0 0 -16px; height: 687px; flex: none; }
    .tools svg { overflow: visible; }
    .tool-t { font: bold 145px "Liberation Serif", serif; stroke: #0a0a0a; stroke-width: 4.500px; }
    .osnap { border-top: 2px solid #d2d2d2; padding: 9px 0 0 22px; font-size: 22.500px; letter-spacing: -.22px; flex: none; color: #1f1f1f; }
    .opt { display: grid; grid-template-columns: 28px 1fr; column-gap: 8px; align-items: center; justify-items: start; height: 36px; }
    .opt.gap { margin-top: 11px; }
    .opt.last { margin-top: 36px; }
    .opt.off { color: #b4b4b4; }
    .radio { width: 28px; height: 28px; border-radius: 50%; background: #fff; border: 1.500px solid #bcbcbc; border-top-color: #a2a2a2; display: grid; place-items: center; }
    .radio.on { background: #3f99fa; border-color: #3f99fa; }
    .radio.on::after { content: ""; width: 8px; height: 8px; border-radius: 50%; background: #fff; }
    .check { width: 24px; height: 24px; margin-left: 2px; border-radius: 5px; background: #fff; border: 1.500px solid #bfbfbf; border-top-color: #a6a6a6; }
    .check.on { background: #3f99fa; border-color: #3f99fa; }
    .check svg { margin: -1px; }
    .off .check { background: #f4f4f4; border-color: #d3d3d3; }

    .center { display: grid; grid-template-rows: 52px 1524px; border-left: 2px solid #929292; border-right: 2px solid #929292; }
    .center .bar { border-bottom-color: #84888a; padding: 0 40px 0 15px; font-size: 25.500px; letter-spacing: -.2px; color: #4d4d4d; }
    .quad { margin-right: 24px; }
    .single { margin-right: 23px; }
    .vt { text-align: center; border-left: 2px solid #929292; line-height: 29px; height: 28px; }
    .vt.sel { color: #157efb; }
    .v1 { width: 223px; padding-right: 3px; } .v2 { width: 126px; padding-right: 3px; } .v3 { width: 144px; padding-right: 2px; } .v4 { width: 140px; }
    .layouts { margin-left: auto; line-height: 30px; padding-top: 1px; letter-spacing: 0; }
    .view { position: relative; background: #9ca3ab; overflow: hidden; }
    .view > svg.cplane { width: 1958px; height: 1524px; }
    .tag { position: absolute; left: 2px; top: 2px; width: 62px; height: 40px; border: 2px solid #1f568c; background: #2f5d8f; color: #fff; font-size: 23px; font-weight: 600; line-height: 40px; text-align: center; letter-spacing: -.2px; padding-right: 2px; }
    .axis { font-size: 22px; fill: #5e6164; }

    .right { display: flex; flex-direction: column; background: #ebebeb; }
    .right .bar { padding-left: 61px; gap: 4px; }
    .right .bar svg { fill: none; stroke: #4f4f4f; stroke-width: 1.800px; stroke-linejoin: round; }
    .right .bar svg.sel { stroke: #157efb; }
    .qmark { width: 44px; text-align: center; font: bold 46px/50px "Noto Sans", sans-serif; color: #4f4f4f; margin-top: -3px; }
    .list { height: 665px; background: #fff; flex: none; overflow: hidden; font-size: 22.500px; letter-spacing: -.3px; }
    .cols { display: grid; grid-template-columns: 249px 46px 46px 46px 60px 48px 85px; align-items: center; }
    .head { height: 44px; border-bottom: 1.500px solid #d2d2d2; color: #454545; font-size: 21.500px; letter-spacing: -.2px; }
    .head b { font-weight: 400; height: 35px; line-height: 32px; padding-left: 7px; border-left: 2px solid #e2e2e2; margin-left: -1px; }
    .head b:first-child { border-left: 0; padding-left: 9px; }
    .row { height: 32px; margin-bottom: 2px; justify-items: center; }
    .row.hl { background: #dcdcdc; }
    .row .name { justify-self: start; padding-left: 38px; margin-top: -1px; }
    .row .lt { justify-self: start; padding: 3px 0 0 13px; letter-spacing: -.6px; }
    .row .sw { width: 28px; height: 28px; border: 2px solid #000; }
    .dim { opacity: .45; }
    .foot { height: 66px; border-top: 2px solid #d0d0d0; display: flex; gap: 34px; padding: 13px 0 0 37px; flex: none; }
    .btns { display: flex; height: 34px; border-radius: 7px; background: linear-gradient(#fff, #f4f4f4); box-shadow: 0 1px 1px #a8a8a8, 0 0 1px 1px #d2d2d2; }
    .split { height: 3px; background: #929292; flex: none; }
    .props { flex: 1; display: flex; align-items: center; justify-content: center; font-size: 39px; letter-spacing: -.62px; color: #a6a6a6; padding: 0 0 61px 16px; }

    .status { display: flex; align-items: center; background: linear-gradient(#dcdcdc, #d0d0d0); border-top: 2px solid #d4d4d4; font-size: 22.500px; letter-spacing: -.06px; color: #0c0c0c; padding-top: 6px; }
    .msg { width: 1822px; padding-left: 5px; }
    .unit { width: 147px; letter-spacing: -.15px; color: #222; }
    .cplanebtn { display: flex; align-items: center; justify-content: space-between; width: 140px; height: 32px; border: 2px solid #939393; border-radius: 8px; padding: 0 8px 0 12px; letter-spacing: -.5px; color: #222; }
    .coord { letter-spacing: -.5px; }
    .x { width: 164px; margin-left: 28px; } .y { width: 170px; }
  `;

  private cell(tool: Tool, x: number, y: number) {
    return html`<svg width="60" height="60" viewBox="${x} ${y} 180 180">${tool.art}${tool.menu
      ? svg`<path d=${`M${x + 132} ${y + 137}h30l-11 29h-8z`} fill="#333"/>` : nothing}</svg>`;
  }

  private panelBar(sel: number) {
    return html`<div class="bar">${PANEL_TABS.map((icon, i) => html`<svg class=${classMap({ sel: i === sel })} width="44" height="40" viewBox="0 0 44 40">${icon}</svg>`)}<span class="qmark">?</span></div>`;
  }

  private toggle(name: string) {
    const next = new Set(this.snaps);
    next.has(name) ? next.delete(name) : next.add(name);
    this.snaps = next;
  }

  private snapRow(name: string, enabled: boolean, extra = "") {
    const on = this.snaps.has(name);
    return html`<div class="opt ${extra} ${enabled ? "" : "off"}" @click=${() => enabled && this.toggle(name)}>
      <span class=${classMap({ check: true, on })}>${on ? html`<svg width="24" height="24" viewBox="0 0 24 24"><path d="M6 12.500L10.500 17L18 7" fill="none" stroke="#fff" stroke-width="2.600" stroke-linecap="round"/></svg>` : nothing}</span><span>${name}</span></div>`;
  }

  render() {
    return html`
      <svg class="defs" width="0" height="0">${gradients}</svg>
      <div class="app">
        <header class="top">
          <div class="side l"></div>
          <nav class="modes">
            <div class="mode on w-grid">Grid Snap</div><div class="mode on w-ortho">Ortho</div><div class="mode w-planar">Planar</div>
            <div class="mode w-smart">SmartTrack</div><div class="mode w-gum">Gumball</div><div class="mode w-hist">History</div>
          </nav>
          <svg class="snapic" width="109" height="46" viewBox="0 0 109 46">
            <circle cx="21" cy="23" r="17.500" fill="none" stroke="#6d6c6e" stroke-width="2"/><path d="M24 24H44" stroke="#000" stroke-width="2.500"/><rect x="18.500" y="20" width="6" height="7" fill="#fff" stroke="#000" stroke-width="2"/>
            <g fill="none" stroke="#000" stroke-width="2"><circle cx="85" cy="24" r="20"/><circle cx="85" cy="24" r="10.500"/></g>
          </svg>
          <div class="picker"><i></i><span>Top_Bottom</span></div>
          <div class="side r"></div>
        </header>

        <div class="main">
          <aside class="left">
            <div class="bar"></div>
            <div class="cmd">Command</div>
            <div class="tools">
              ${SHEET_A.map((row, r) => row.map((tool, i) => this.cell(tool, -48 + 180 * i, 20 + 180 * r)))}
              ${SHEET_B.map((row, r) => row.map((tool, i) => this.cell(tool, -48 + 180 * i, -40 + 180 * r)))}
            </div>
            <section class="osnap">
              <div class="opt" @click=${() => (this.persistent = true)}><span class=${classMap({ radio: true, on: this.persistent })}></span><span>Persistent</span></div>
              <div class="opt" @click=${() => (this.persistent = false)}><span class=${classMap({ radio: true, on: !this.persistent })}></span><span>One shot</span></div>
              ${SNAPS.map(([name, en], i) => this.snapRow(name, en, i === 0 ? "gap" : ""))}
              ${this.snapRow("Disable all", true, "last")}
            </section>
          </aside>

          <section class="center">
            <div class="bar">
              <svg class="quad" width="40" height="36" viewBox="0 0 40 36"><path d="M.7 .7H39.300V35.300H.7Z" fill="none" stroke="#4d4d4d" stroke-width="1.400"/><path d="M20 0V36M0 18H40" stroke="#4d4d4d" stroke-width="2"/><path d="M1 1.500H9M20 1.500H29M1 19.500H9M20 19.500H29" stroke="#4d4d4d" stroke-width="3"/></svg>
              <svg class="single" width="40" height="36" viewBox="0 0 40 36"><path d="M.7 .7H39.300V35.300H.7Z" fill="none" stroke="#157efb" stroke-width="1.400"/><path d="M1 1.500H9" stroke="#157efb" stroke-width="3"/></svg>
              <div class="vt v1">Perspective</div><div class="vt v2 sel">Top</div><div class="vt v3">Front</div><div class="vt v4">Right</div>
              <div class="layouts">Layouts...</div>
            </div>
            <div class="view">
              <svg class="cplane" viewBox="0 0 1958 1524">
                <g fill="none" stroke-width="2" shape-rendering="crispEdges">
                  <path d=${MINOR} stroke="#949ba3"/><path d=${MAJOR} stroke="#848892"/>
                </g>
                <path d="M1120 29V1039" stroke="#489a4b" stroke-width="3.600"/><path d="M1120 1038.500H1958" stroke="#a04a4d" stroke-width="3.600"/>
                <rect x="817" y="281" width="606" height="807.500" fill="none" stroke="#000" stroke-width="2"/>
                <svg x="824" y="680" width="320" height="420" viewBox="0 0 960 1260">${board}</svg>
                <path d="M72 1393V1452H132" fill="none" stroke="#636669" stroke-width="2"/>
                <text class="axis" x="75" y="1394">y</text><text class="axis" x="135" y="1454">x</text>
              </svg>
              <div class="tag">Top</div>
            </div>
          </section>

          <aside class="right">
            ${this.panelBar(0)}
            <div class="list">
              <div class="cols head"><b>Name</b><b></b><b></b><b></b><b></b><b></b><b>Linetyp</b></div>
              ${LAYERS.map((l) => {
                const cur = l.name === this.current;
                return html`<div class=${classMap({ cols: true, row: true, hl: l.name === "Arduino" })}>
                  <span class="name">${l.name}</span>
                  <span class=${classMap({ radio: true, on: cur })} @click=${() => (this.current = l.name)}></span>
                  <span class=${classMap({ dim: cur })}>${bulb}</span><span class=${classMap({ dim: cur })}>${lock}</span>
                  <span class="sw" style=${styleMap({ backgroundColor: l.color })}></span>${material}<span class="lt">Conti...</span>
                </div>`;
              })}
            </div>
            <div class="foot">
              <div class="btns"><svg width="86" height="34" viewBox="0 0 86 34"><path d="M10 17H33M21.500 6V28M55 17H77" stroke="#454545" stroke-width="2"/><path d="M46 0V34" stroke="#d8d8d8" stroke-width="2"/></svg></div>
              <div class="btns"><svg width="69" height="34" viewBox="0 0 69 34"><circle cx="23" cy="17" r="5.500" fill="none" stroke="#222" stroke-width="4.500"/><path d="M23 7V11M23 23V27M13 17H17.500M28.500 17H33M16 10L19 13M27 21L30 24M30 10L27 13M16 24L19 21" stroke="#222" stroke-width="4"/><path d="M50 14L55.500 20L61 14" fill="none" stroke="#3c3c3c" stroke-width="2.400"/></svg></div>
            </div>
            <div class="split"></div>
            ${this.panelBar(1)}
            <div class="props">No Selection</div>
          </aside>
        </div>

        <footer class="status">
          <svg width="21" height="24" viewBox="0 0 21 24"><path d="M0 2H21M0 8.500H21M0 15H21M0 21.500H21" stroke="#5c5c5c" stroke-width="2"/></svg>
          <div class="msg">1 block instance added to selection.</div>
          <div class="unit">Millimeters</div>
          <div class="cplanebtn">CPlane<svg width="14" height="24" viewBox="0 0 14 24"><path d="M2 8.500L7 2.500L12 8.500M2 15.500L7 21.500L12 15.500" fill="none" stroke="#8a8a8a" stroke-width="2.200"/></svg></div>
          <div class="coord x">X: 83.90</div><div class="coord y">Y: 23.28</div><div class="coord">Z: 0.00</div>
        </footer>
      </div>`;
  }
}
